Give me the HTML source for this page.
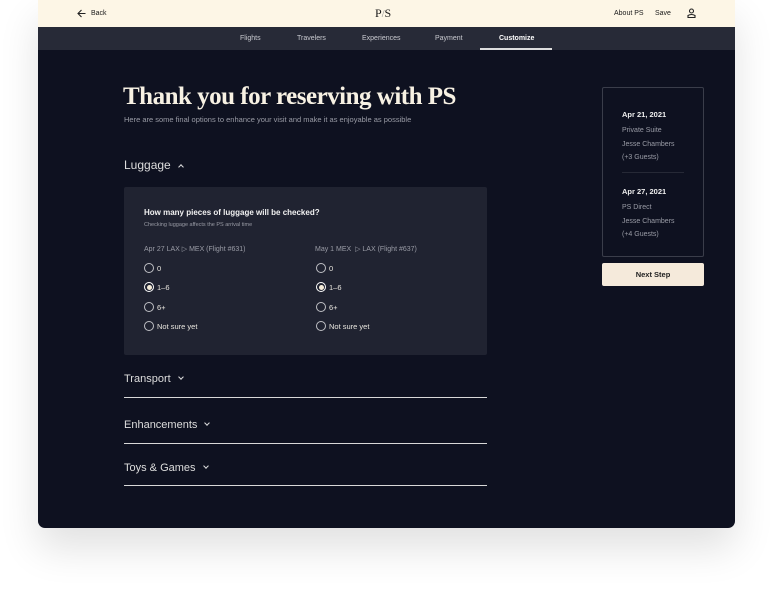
<!DOCTYPE html>
<html><head><style>
*{margin:0;padding:0;box-sizing:border-box}
body{width:773px;height:605px;background:#fff;font-family:"Liberation Sans",sans-serif;position:relative;overflow:hidden}
.card{position:absolute;left:38px;top:0;width:697px;height:528px;background:#0e1120;border-radius:0 0 7px 7px;overflow:hidden;box-shadow:0 20px 40px rgba(0,0,0,0.12)}
.hdr{position:absolute;left:0;top:0;width:697px;height:27px;background:#fdf6e6;color:#1a1a1a;font-size:7px}
.nav{position:absolute;left:0;top:27px;width:697px;height:23px;background:#272a37;color:#c9cad0;font-size:7px}
.a{position:absolute;white-space:nowrap}
.w{color:#e9e6df}
.g{color:#9a9ca6}
.radio{position:absolute;width:10px;height:10px;border:1px solid #bfc0c5;border-radius:50%}
.radio.on::after{content:"";position:absolute;left:1.5px;top:1.5px;width:5px;height:5px;border-radius:50%;background:#f5ecd8}
.radio.on{border-color:#fff}
.line{position:absolute;left:86px;width:363px;height:1px;background:#d8d8d8}
.chev{display:inline-block;width:4px;height:4px;border-right:1.3px solid #ddd;border-bottom:1.3px solid #ddd;transform:rotate(45deg);margin-left:8px;vertical-align:3px}
.chev.up{transform:rotate(-135deg);vertical-align:0}
</style></head><body>
<div class="card">
 <div class="hdr">
  <svg class="a" style="left:39px;top:9px" width="9" height="9" viewBox="0 0 9 9"><path d="M8.5 4.5H1M4.5 1L1 4.5L4.5 8" fill="none" stroke="#222" stroke-width="1.1"/></svg>
  <div class="a" style="left:53px;top:10px">Back</div>
  <div class="a" style="left:337px;top:6px;font-family:'Liberation Serif',serif;font-size:12px">P<span style="font-size:10px;color:#888">/</span>S</div>
  <div class="a" style="left:576px;top:10px">About PS</div>
  <div class="a" style="left:617px;top:10px">Save</div>
  <svg class="a" style="left:649px;top:8px" width="9" height="10" viewBox="0 0 9 10"><circle cx="4.5" cy="3" r="2" fill="none" stroke="#222" stroke-width="1.1"/><path d="M1 9.5V7.5Q4.5 5.5 8 7.5V9.5Z" fill="none" stroke="#222" stroke-width="1.1"/></svg>
 </div>
 <div class="nav">
  <div class="a" style="left:202px;top:8px">Flights</div>
  <div class="a" style="left:259px;top:8px">Travelers</div>
  <div class="a" style="left:324px;top:8px">Experiences</div>
  <div class="a" style="left:397px;top:8px">Payment</div>
  <div class="a" style="left:461px;top:8px;color:#fff;font-weight:bold">Customize</div>
  <div class="a" style="left:442px;top:21px;width:72px;height:1.5px;background:#ddd"></div>
 </div>
 <div class="a w" style="left:85px;top:83px;font-family:'Liberation Serif',serif;font-size:25px;font-weight:bold;letter-spacing:-0.5px;color:#f7f1e3">Thank you for reserving with PS</div>
 <div class="a g" style="left:86px;top:115px;font-size:7.5px">Here are some final options to enhance your visit and make it as enjoyable as possible</div>
 <div class="a w" style="left:86px;top:158px;font-size:12px;color:#ddd">Luggage<span class="chev up"></span></div>
 <div class="a" style="left:86px;top:187px;width:363px;height:168px;background:#202331;border-radius:2px">
  <div class="a" style="left:20px;top:21px;font-size:8px;font-weight:bold;color:#f2f2f2">How many pieces of luggage will be checked?</div>
  <div class="a g" style="left:20px;top:35px;font-size:5.5px">Checking luggage affects the PS arrival time</div>
  <div class="a g" style="left:20px;top:58px;font-size:7px">Apr 27 LAX ▷ MEX (Flight #631)</div>
  <div class="a g" style="left:191px;top:58px;font-size:7px">May 1 MEX &nbsp;▷ LAX (Flight #637)</div>
  <div class="radio" style="left:20px;top:76px"></div><div class="a w" style="left:33px;top:77px;font-size:7.5px">0</div>
  <div class="radio on" style="left:20px;top:95px"></div><div class="a w" style="left:33px;top:96px;font-size:7.5px">1–6</div>
  <div class="radio" style="left:20px;top:115px"></div><div class="a w" style="left:33px;top:116px;font-size:7.5px">6+</div>
  <div class="radio" style="left:20px;top:134px"></div><div class="a w" style="left:33px;top:135px;font-size:7.5px">Not sure yet</div>
  <div class="radio" style="left:192px;top:76px"></div><div class="a w" style="left:205px;top:77px;font-size:7.5px">0</div>
  <div class="radio on" style="left:192px;top:95px"></div><div class="a w" style="left:205px;top:96px;font-size:7.5px">1–6</div>
  <div class="radio" style="left:192px;top:115px"></div><div class="a w" style="left:205px;top:116px;font-size:7.5px">6+</div>
  <div class="radio" style="left:192px;top:134px"></div><div class="a w" style="left:205px;top:135px;font-size:7.5px">Not sure yet</div>
 </div>
 <div class="a w" style="left:86px;top:373px;font-size:11px;color:#ddd">Transport<span class="chev"></span></div>
 <div class="line" style="top:397px"></div>
 <div class="a w" style="left:86px;top:419px;font-size:11px;color:#ddd">Enhancements<span class="chev"></span></div>
 <div class="line" style="top:443px"></div>
 <div class="a w" style="left:86px;top:462px;font-size:11px;color:#ddd">Toys &amp; Games<span class="chev"></span></div>
 <div class="line" style="top:485px"></div>
 <div class="a" style="left:564px;top:87px;width:102px;height:170px;border:1px solid #3a3d4a;border-radius:2px">
  <div class="a" style="left:19px;top:22px;font-size:7.5px;font-weight:bold;color:#eee">Apr 21, 2021</div>
  <div class="a g" style="left:19px;top:36px;font-size:7px;line-height:13.5px">Private Suite<br>Jesse Chambers<br>(+3 Guests)</div>
  <div class="a" style="left:19px;top:84px;width:62px;height:1px;background:#262936"></div>
  <div class="a" style="left:19px;top:99px;font-size:7.5px;font-weight:bold;color:#eee">Apr 27, 2021</div>
  <div class="a g" style="left:19px;top:113px;font-size:7px;line-height:13.5px">PS Direct<br>Jesse Chambers<br>(+4 Guests)</div>
 </div>
 <div class="a" style="left:564px;top:263px;width:102px;height:23px;background:#f5eadb;border-radius:2px;font-size:7.5px;font-weight:bold;color:#222;text-align:center;line-height:23px">Next Step</div>
</div>
</body></html>
